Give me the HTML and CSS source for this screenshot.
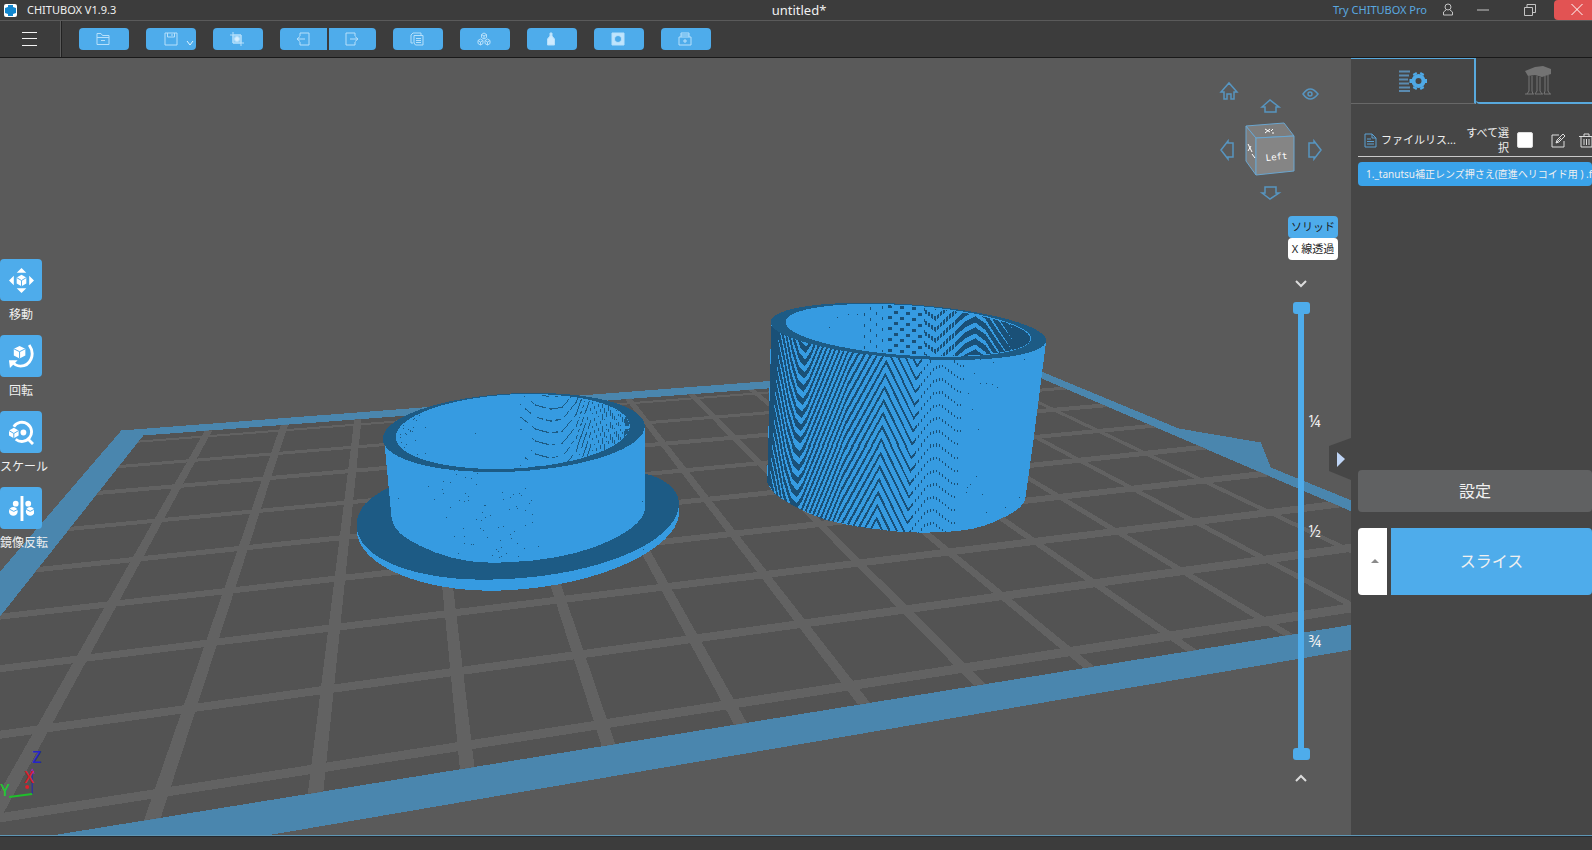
FILE: index.html
```html
<!DOCTYPE html>
<html lang="ja">
<head>
<meta charset="utf-8">
<title>CHITUBOX V1.9.3</title>
<link rel="stylesheet" href="styles.css">
</head>
<body>
<header class="titlebar">
  <div class="brand">
    <svg class="logo" viewBox="0 0 13 13" aria-hidden="true"><rect width="13" height="13" rx="2" fill="#fff"/><path d="M4 1h5v2l3 1v5l-3 1v2H4v-2L1 9V4l3-1z" fill="#1287cf"/></svg>
    <span>CHITUBOX V1.9.3</span>
  </div>
  <h1 class="doc-title">untitled*</h1>
  <div class="window-tools">
    <a class="pro-link" href="#">Try CHITUBOX Pro</a>
    <button class="win-btn" aria-label="アカウント"><svg width="12" height="14" viewBox="0 0 12 14"><circle cx="6" cy="4" r="3"/><path d="M4 7 1.500 9v3h9V9L8 7"/></svg></button>
    <button class="win-btn win-min" aria-label="最小化"><svg width="12" height="14" viewBox="0 0 12 14"><path d="M0 7h12"/></svg></button>
    <button class="win-btn win-max" aria-label="元に戻す"><svg width="12" height="14" viewBox="0 0 12 14"><path d="M.5 4.500h8v8h-8zM3 4.500v-3h8.500v8h-3"/></svg></button>
    <button class="win-btn win-close" aria-label="閉じる"><svg width="12" height="14" viewBox="0 0 12 14"><path d="m.5 1 11 11m0-11-11 11"/></svg></button>
  </div>
</header>

<nav class="toolbar">
  <button class="menu-btn" aria-label="メニュー"><svg width="16" height="14" viewBox="0 0 16 14" shape-rendering="crispEdges"><path d="M.5 .5h15M.5 6.500h15M.5 13.500h15"/></svg></button>
  <div class="tool-row">
    <button class="tool" aria-label="開く"><svg viewBox="0 0 14 14"><path d="M1 12.500V1.500h4l1.500 2H13v9zM1 5.500h12M5 8.500h4"/></svg></button>
    <button class="tool tool-save" aria-label="保存"><svg viewBox="0 0 14 14"><path d="M1 1h12v12H1zM3.500 1v4h7V1M8 2v2"/></svg><svg class="caret" viewBox="0 0 8 6"><path d="m1 1 3 4 3-4"/></svg></button>
    <button class="tool" aria-label="スクリーンショット"><svg viewBox="0 0 14 14"><path d="M3 0v11h11M0 3h11v11"/><path d="M3 3h8v8H3z" fill="#8fcdf6"/><circle cx="7" cy="7" r="2.500" fill="#d8efff"/></svg></button>
    <div class="tool-pair">
      <button class="tool" aria-label="元に戻す"><svg viewBox="0 0 14 14"><path d="M4 4V1h9v12H4v-3M1 7h8M4 4.500 1 7l3 2.500"/></svg></button>
      <button class="tool" aria-label="やり直す"><svg viewBox="0 0 14 14"><path d="M10 4V1H1v12h9v-3M5 7h8m-3-2.500L13 7l-3 2.500"/></svg></button>
    </div>
    <button class="tool" aria-label="コピー"><svg viewBox="0 0 14 14"><path d="M3 11H1V3l2-2h8v2M4 3.500h9V13H5.500L4 11zM6 6.500h5M6 8.500h5M6 10.500h5"/></svg></button>
    <button class="tool" aria-label="自動レイアウト"><svg viewBox="0 0 14 14"><path d="m7 1 2.500 1.500v3L7 7 4.500 5.500v-3zM4.500 2.500 7 4l2.500-1.500M7 4v3M3.500 7 6 8.500v3L3.500 13 1 11.500v-3zM1 8.500 3.500 10 6 8.500M3.500 10v3M10.500 7 13 8.500v3L10.500 13 8 11.500v-3zM8 8.500l2.500 1.500L13 8.500M10.500 10v3"/></svg></button>
    <button class="tool" aria-label="中空"><svg viewBox="0 0 14 14"><path d="M6 1h2v3l2.500 3v6h-7V7L6 4z" fill="#cdeaff"/></svg></button>
    <button class="tool" aria-label="穴あけ"><svg viewBox="0 0 14 14"><path fill-rule="evenodd" d="M1 1h12v12H1zM7 3.500a3.500 3.500 0 1 0 .01 0z" fill="#bfe4fd"/></svg></button>
    <button class="tool" aria-label="修復"><svg viewBox="0 0 14 14"><path d="M1 5h12v8H1zM3 5V1h8v4M3 3h8M7 7v4M5 9h4"/></svg></button>
  </div>
</nav>

<main class="workspace">
  <section class="viewport" aria-label="3D ビュー">
    <svg class="scene" viewBox="0 58 1351 776" preserveAspectRatio="xMidYMid slice" shape-rendering="crispEdges" aria-hidden="true">
      <defs>
        <clipPath id="floorClip"><path d="M144 435 1020 369 1351 511V624L0 843V617z"/></clipPath>
      </defs>
      <path class="band" d="M122 430 1000 363 1043 372 1178 428 1260 442 1270 467 1351 500V649L200 846H-20V595z"/>
      <path class="void" d="M0 380H122V430L0 572z"/>
      <path class="floor" d="M144 435 1020 369 1351 511V624L0 843V617z"/>
      <g id="grid" clip-path="url(#floorClip)"></g>

      <path class="lit" d="M357 522v8c3 38 70 60 133 60 100 0 186-40 189-76v-12z"/>
      <path class="shade" d="M395 484c-26 12-38 24-38 40 0 36 63 55 126 55 107 0 196-36 196-76 0-14-14-25-34-30z"/>
      <path class="lit" d="M384 434 392 518c2 12 12 19 28 27 20 10 44 17 70 17 40 0 75-5 103-15 30-11 52-26 52-39V428z"/>
      <ellipse class="shade" cx="514" cy="432" rx="131" ry="39" transform="rotate(-3 514 432)"/>
      <ellipse class="lit" cx="513" cy="431" rx="117" ry="37" transform="rotate(-3 513 431)"/>
      <path id="ringMoire" class="shade"/>

      <path class="lit" d="M771 325 767 480c2 10 10 16 23 23 14 8 20 11 33 15 16 5 31 8 50 10 20 3 32 4 50 4s34-1 50-4c14-3 24-8 34-13 12-6 17-12 18-18l8-57 13-102z"/>
      <path id="wallMoire" class="deep"/>
      <ellipse class="shade" cx="908" cy="331" rx="138" ry="27" transform="rotate(4 908 331)"/>
      <ellipse class="lit" cx="908" cy="330" rx="123" ry="25" transform="rotate(4 908 330)"/>
      <path id="boreMoire" class="deep"/>

      <g class="axes" shape-rendering="auto">
        <path d="M33 768v25" stroke="#2424b8"/><path d="M33 793 10 796" stroke="#1fbf2b" stroke-width="2"/><path d="m33 768 2 5M31 773l2-5" stroke="#a02ab0"/>
        <circle cx="28" cy="786" r="2" fill="#e0202c"/>
        <text x="33" y="762" fill="#2424c8">Z</text><text x="25" y="782" fill="#d9202c">X</text><text x="1" y="795" fill="#22c832">Y</text>
      </g>
    </svg>

    <ul class="side-tools">
      <li><button id="t-move"><svg viewBox="0 0 26 26"><path d="m13 0 5 5H8zM13 26l-5-5h10zM0 13l5-5v10zM26 13l-5 5V8z"/><path d="m13 7 5 3v6l-5 3-5-3v-6z"/><path class="cut" d="m8 10 5 3 5-3M13 13v6"/></svg></button><label for="t-move">移動</label></li>
      <li><button id="t-rotate"><svg viewBox="0 0 26 26"><path d="m11 2 6 3v7l-6 3-6-3V5z"/><path class="cut" d="m5 5 6 3 6-3M11 8v7"/><path class="arc" d="M21 1c7 10 1 22-9 22-4 0-7-2-9-5"/><path d="M0 17h9l-8 8z"/></svg></button><label for="t-rotate">回転</label></li>
      <li><button id="t-scale"><svg viewBox="0 0 26 26"><path class="arc" d="M5 7a10 10 0 1 1 2 13M20 20l5 5"/><path d="m5 8 5 3v5l-5 3-5-3v-5z"/><path class="cut" d="m0 11 5 3 5-3M5 14v5"/><circle cx="15" cy="13" r="3"/></svg></button><label for="t-scale">スケール</label></li>
      <li><button id="t-mirror"><svg viewBox="0 0 26 26"><path d="M12 0h3v26h-3z"/><circle cx="7" cy="8" r="3"/><circle cx="20" cy="8" r="3"/><circle cx="4.500" cy="16" r="4.500"/><circle cx="22" cy="16" r="4.500"/><path class="cut" d="m1 14 4 2 4-2M26 14l-4 2-4-2"/></svg></button><label for="t-mirror">鏡像反転</label></li>
    </ul>

    <div class="view-cube">
      <svg width="132" height="124" viewBox="0 0 132 124" aria-label="Left">
        <g class="cube-nav">
          <path d="M2 12 10 3l8 9h-3v7h-3v-5H8v5H5v-7z"/>
          <path d="M84 14q7-10 15 0-8 10-15 0z"/><circle cx="91" cy="14" r="2"/>
          <path d="m43 27 8-7 9 7h-3v5H46v-5z"/>
          <path d="m2 70 7-9v2h5v14H9v2zM102 70l-7-9v2h-5v14h5v2z"/>
          <path d="m43 113 8 6 9-6h-3v-6H46v6z"/>
        </g>
        <path class="cube-side" d="m27 46 10 12v37L27 81z"/><path class="cube-top" d="m27 46 38-3 10 13-38 2z"/><path class="cube-front" d="m37 58 38-2v35l-38 4z"/>
        <g class="cube-text"><text x="47" y="81" transform="rotate(-6 47 81)">Left</text></g>
        <path class="cube-scribble" d="m29 64 4 8m-4-1 3-5m1 8 3 4M46 49l5 3m-5 1 5-4m2 4h2m-1-4-2 2"/>
      </svg>
    </div>

    <div class="mode-toggle">
      <button class="mode is-on">ソリッド</button>
      <button class="mode">X 線透過</button>
    </div>

    <div class="layer-slider">
      <button aria-label="下へ"><svg width="12" height="8" viewBox="0 0 12 8"><path d="m1 1 5 5 5-5"/></svg></button>
      <div class="track">
        <input type="range" min="0" max="100" value="0" aria-label="上端">
        <input type="range" min="0" max="100" value="100" aria-label="下端">
        <div class="marks"><span>¼</span><span>½</span><span>¾</span></div>
      </div>
      <button aria-label="上へ"><svg width="12" height="8" viewBox="0 0 12 8"><path d="m1 7 5-5 5 5"/></svg></button>
    </div>
    <button class="collapse" aria-label="パネルを閉じる"><svg width="22" height="42" viewBox="0 0 22 42"><path d="M0 8 22 0v42L0 33z" fill="#464646"/><path d="m8 14 8 7-8 8z" fill="#bfd5f6"/></svg></button>
  </section>

  <aside class="panel">
    <div class="tabs">
      <button class="tab is-active" aria-label="設定"><svg width="28" height="22" viewBox="0 0 28 22"><path d="M0 1.500h11M0 5.500h10M0 9.500h9M0 13.500h10M0 17.500h11M0 21h11" stroke="#5b8bb0" stroke-width="2"/><g transform="translate(19.500 11)"><circle r="5" fill="none" stroke="#4fa9e6" stroke-width="4"/><path d="M-6 0h-3M6 0h3M-3-6l-1-2M3-6l1-2M-3 6l-1 2M3 6l1 2" stroke="#4fa9e6" stroke-width="4"/></g></svg></button>
      <button class="tab" aria-label="サポート"><svg width="28" height="29" viewBox="0 0 28 29"><path d="M1 5 11 1l8-1 8 3v5l-9 3-7-2-7 1z" fill="#737373"/><path d="M5 10v15l-2 3M8 10v15l1 3M13 10v15l-2 3M16 11v14l2 3M21 10v15l-1 3M24 9v16l2 3M1 28h9M11 28h8M20 28h7" fill="none" stroke="#777"/></svg></button>
    </div>
    <div class="file-head">
      <svg width="13" height="15" viewBox="0 0 13 15"><path d="M1 1h7l4 4v9H1zM8 1v4h4M3 6h4M3 8.500h7M3 11h7" fill="none" stroke="#5aa0d2"/></svg>
      <span class="file-title">ファイルリス...</span>
      <label class="all-label" for="all">すべて選択</label>
      <input type="checkbox" id="all">
      <button class="head-btn" aria-label="編集"><svg width="15" height="15" viewBox="0 0 15 15"><path d="M8 2H1v12h12V8M5 10l1-3 6-6 2 2-6 6zM5 10l5-5"/></svg></button>
      <button class="head-btn" aria-label="削除"><svg width="15" height="15" viewBox="0 0 15 15"><path d="M0 3.500h15M5 3V1h5v2M2 4v10h11V4M5 6v6M7.500 6v6M10 6v6"/></svg></button>
    </div>
    <ul class="files"><li>1._tanutsu補正レンズ押さえ(直進ヘリコイド用 ) .f</li></ul>
    <button class="settings">設定</button>
    <div class="slice-row">
      <button class="slice-more" aria-label="その他"><svg width="8" height="4" viewBox="0 0 8 4"><path d="M0 4 4 0l4 4z" fill="#8a8a8a"/></svg></button>
      <button class="slice">スライス</button>
    </div>
  </aside>
</main>
<footer class="statusbar"></footer>
<script src="scene.js"></script>
</body>
</html>
```
FILE: styles.css
```css
* { box-sizing: border-box; }
body {
  margin: 0;
  height: 100vh;
  display: flex;
  flex-direction: column;
  overflow: hidden;
  background: #3c3c3c;
  color: #f0f0f0;
  font: 12px/16px "Noto Sans", "Noto Sans CJK JP", sans-serif;
}
button { margin: 0; padding: 0; border: 0; background: none; color: inherit; font: inherit; cursor: pointer; }
svg { display: block; }
ul { margin: 0; padding: 0; list-style: none; }

.titlebar {
  display: grid;
  grid-template-columns: 1fr auto 1fr;
  align-items: center;
  height: 21px;
  border-bottom: 1px solid #5a5a5a;
  font-size: 11px;
}
.brand { display: flex; align-items: center; gap: 10px; padding-left: 4px; }
.logo { width: 13px; height: 13px; }
.doc-title { margin: 0; padding-left: 6px; font-size: 13px; font-weight: 400; line-height: 20px; }
.window-tools { display: flex; justify-content: flex-end; align-items: center; height: 20px; }
.pro-link { color: #5aa9e0; text-decoration: none; margin-right: 15px; }
.win-btn { display: grid; place-items: center; width: 12px; height: 20px; }
.win-btn svg { fill: none; stroke: #c4c4c4; }
.win-min { margin-left: 23px; }
.win-max { margin: 0 18px 0 35px; }
.win-close { width: 38px; padding-left: 8px; background: #e25353; border-radius: 4px 0 0 4px; }
.win-close svg { stroke: #fff; }

.toolbar { display: flex; align-items: center; height: 37px; border-bottom: 1px solid #191919; }
.menu-btn { display: grid; place-items: center; width: 61px; height: 36px; padding-right: 3px; border-right: 1px solid #5c5c5c; box-shadow: 1px 0 #222; }
.menu-btn svg { fill: none; stroke: #f4f4f4; }
.tool-row { display: flex; gap: 17px; padding-left: 18px; }
.tool-pair { display: flex; gap: 2px; }
.tool { display: grid; place-items: center; width: 50px; height: 22px; padding-right: 2px; border-radius: 4px; background: #4eaceb; }
.tool svg { width: 14px; height: 14px; fill: none; stroke: #b6e0fb; }
.tool-save { display: flex; align-items: center; justify-content: flex-end; gap: 8px; padding-right: 2px; }
.tool-save .caret { width: 8px; height: 6px; margin-top: 8px; stroke: #e2f4ff; }
.tool-pair .tool { width: 47px; }
.tool-pair .tool:first-child { border-radius: 4px 0 0 4px; }
.tool-pair .tool:last-child { border-radius: 0 4px 4px 0; }

.workspace { flex: 1; min-height: 0; display: flex; }
.viewport { position: relative; flex: 1; min-width: 0; overflow: hidden; background: #5a5a5a; }
.scene { width: 100%; height: 100%; }
.band { fill: #4a86ae; }
.void { fill: #5a5a5a; }
.floor { fill: #535353; }
#grid { fill: #626262; stroke: #626262; }
.lit { fill: #369be1; }
.shade { fill: #1d5b85; }
.deep { fill: #1a5077; }
.axes { fill: none; font: 500 16px "Noto Sans", sans-serif; }

.side-tools { position: absolute; left: 0; top: 201px; display: flex; flex-direction: column; gap: 12px; }
.side-tools li { display: flex; flex-direction: column; align-items: flex-start; gap: 6px; }
.side-tools button { display: grid; place-items: center; width: 42px; height: 42px; border-radius: 4px; background: #4eaceb; }
.side-tools button svg { width: 25px; height: 25px; fill: #fff; }
.side-tools .cut { fill: none; stroke: #4eaceb; }
.side-tools .arc { fill: none; stroke: #fff; stroke-width: 3; }
.side-tools label { min-width: 42px; text-align: center; white-space: nowrap; }

.view-cube { position: absolute; right: 0; top: 22px; }
.cube-nav { fill: none; stroke: #5795c0; stroke-width: 1.5; }
.cube-side, .cube-top, .cube-front { fill: #858585; stroke: #6aa6d0; }
.cube-side, .cube-top { fill: #7d7d7d; }
.cube-text { fill: #fff; font: 9px "DejaVu Sans Mono", monospace; }
.cube-scribble { fill: none; stroke: #fff; }

.mode-toggle { position: absolute; right: 13px; top: 158px; display: flex; flex-direction: column; }
.mode { width: 50px; height: 22px; border-radius: 4px; background: #fff; color: #1d1d1d; font-size: 11px; white-space: nowrap; }
.mode.is-on { background: #4eaceb; }

.layer-slider { position: absolute; right: 29px; top: 222px; bottom: 53px; width: 42px; display: flex; flex-direction: column; align-items: center; gap: 14px; }
.layer-slider svg { fill: none; stroke: #dcdcdc; stroke-width: 2; }
.track { position: relative; flex: 1; width: 17px; background: linear-gradient(#4eaceb, #4eaceb) center / 6px 100% no-repeat; }
.track input { position: absolute; inset: 0; width: 17px; height: 100%; margin: 0; appearance: none; background: none; writing-mode: vertical-lr; pointer-events: none; }
.track input::-webkit-slider-runnable-track { background: none; width: 17px; }
.track input::-webkit-slider-thumb { appearance: none; width: 17px; height: 12px; border-radius: 3px; background: #4eaceb; pointer-events: auto; }
.marks { position: absolute; left: 16px; top: 0; height: 100%; display: flex; flex-direction: column; justify-content: center; font-size: 16px; line-height: 20px; gap: 90px; }
.collapse { position: absolute; right: 0; top: 380px; }

.panel { width: 241px; display: flex; flex-direction: column; overflow: hidden; background: #464646; }
.tabs { display: flex; height: 46px; flex: none; }
.tab { display: grid; place-items: center; flex: 1; padding-left: 8px; background: #3f3f3f; border-bottom: 2px solid #58a9dd; border-radius: 0 0 0 4px; }
.tab.is-active { flex: none; width: 125px; padding-left: 0; background: #464646; border-top: 1px solid #58a9dd; border-right: 2px solid #58a9dd; border-bottom: 1px solid #686868; border-radius: 0; }
.file-head { display: flex; align-items: center; flex: none; height: 33px; margin: 20px 0 0 7px; padding-left: 6px; border-bottom: 1px solid #c8c8c8; overflow: hidden; }
.file-head > * { flex: none; }
.file-title { margin-left: 4px; width: 78px; font-size: 11px; white-space: nowrap; }
.all-label { width: 50px; padding-left: 4px; text-align: right; font-size: 11px; line-height: 15px; }
.file-head input { appearance: none; width: 16px; height: 16px; margin: 0 18px 0 8px; border-radius: 2px; background: #fff; border: 1px solid #ddd; }
.head-btn { margin-right: 13px; }
.head-btn svg { fill: none; stroke: #dcdcdc; }
.files { flex: 307; margin: 5px 0 0 7px; }
.files li { height: 24px; padding-left: 8px; border-radius: 4px; background: #3aa3ea; font-size: 10px; line-height: 24px; white-space: nowrap; overflow: hidden; }
.settings { flex: none; height: 42px; margin-left: 7px; border-radius: 4px; background: #606162; font-size: 16px; }
.slice-row { flex: 0 0 auto; display: flex; gap: 4px; height: 67px; margin: 16px 0 0 7px; }
.slice-more { display: grid; place-items: center; width: 29px; border-radius: 4px 0 0 4px; background: #fff; padding-left: 4px; }
.slice { flex: 1; border-radius: 0 4px 4px 0; background: #4eaceb; font-size: 16px; }
.panel::after { content: ""; flex: 240; }

.statusbar { height: 15px; flex: none; border-top: 1px solid #5f96b4; box-shadow: inset 0 1px #252a30; }
```
FILE: scene.js
```js
// Build plate: lines that run to the vanishing point, then the cross lines.
const NS = "http://www.w3.org/2000/svg";
const grid = document.getElementById("grid");
const add = (tag, attrs) => {
  const el = document.createElementNS(NS, tag);
  for (const k in attrs) el.setAttribute(k, attrs[k]);
  grid.appendChild(el);
};
const vx = 395, vy = 96;
for (let k = 1; k <= 13; k++) {
  const s = -0.335 + 0.2215 * (k - 2);
  const at = (y, d) => (vx + (s + d) * (y - vy)) + " " + y;
  add("path", { d: `M${at(340, -0.011)}L${at(340, 0.011)}L${at(850, 0.011)}L${at(850, -0.011)}z`, stroke: "none" });
}
[[817, 0.1554, 9], [734, 0.1384, 8], [668, 0.123, 7], [616, 0.113, 6], [573, 0.105, 5],
 [535, 0.0952, 4], [501, 0.087, 4], [476, 0.083, 3], [452, 0.078, 2]]
  .forEach(([y, s, w]) => add("path", { d: `M0 ${y}L1351 ${y - s * 1351}`, "stroke-width": w }));

// Interference pattern of the facets, built from one-pixel-wide vertical runs.
function runs(x0, x1, y0, y1, dark) {
  let d = "";
  for (let x = x0; x < x1; x++) {
    let start = -1;
    for (let y = y0; y <= y1; y++) {
      const on = y < y1 && dark(x, y);
      if (on && start < 0) start = y;
      if (!on && start >= 0) { d += `M${x} ${start}h1v${y - start}h-1z`; start = -1; }
    }
  }
  return d;
}
const curve = pts => x => {
  for (let i = 1; i < pts.length; i++) {
    if (x <= pts[i][0]) {
      const [a, b] = pts[i - 1], [c, e] = pts[i];
      return b + (e - b) * (x - a) / (c - a);
    }
  }
  return pts[pts.length - 1][1];
};
const frac = v => v - Math.floor(v);
const noise = (x, y) => frac(Math.sin(x * 12.9898 + y * 78.233) * 43758.5453);
const ellipse = (cx, cy, rx, ry, deg) => (x, y) => {
  const a = deg * Math.PI / 180, dx = x - cx, dy = y - cy;
  const u = dx * Math.cos(a) + dy * Math.sin(a), v = dy * Math.cos(a) - dx * Math.sin(a);
  return (u / rx) ** 2 + (v / ry) ** 2 < 1;
};

const bottom = curve([[766, 480], [774, 492], [790, 503], [823, 518], [873, 528], [923, 532], [973, 528], [1007, 515], [1025, 497], [1046, 338]]);
const wave = curve([[776, -30], [784, 0], [792, 32], [800, 54], [806, 60], [811, 52], [850, -60], [887, -135], [918, -78], [936, -102], [944, -104], [962, -90]]);
const fill = curve([[776, 0.85], [784, 0.6], [800, 0.52], [815, 0.48], [850, 0.42], [890, 0.32], [920, 0.24], [950, 0.2], [962, 0.14]]);
document.getElementById("wallMoire").setAttribute("d", runs(767, 1046, 326, 532, (x, y) => {
  if (y > bottom(x) || x < 771 - (y - 326) * 0.027) return false;
  const u = x + (y - 340) * 0.062;
  if (u > 966) return noise(x, y) > 0.9985;
  if (u < 778) return true;
  if (u > 922 && x % 3 !== 0) return false;
  return frac((y - wave(u)) / 13) < fill(u);
}));

const bore = ellipse(908, 330, 122, 24, 4);
const boreWave = curve([[850, 0], [900, 6], [935, 30], [965, 2], [975, -3], [985, 4], [1000, 26], [1032, 70]]);
const boreFill = curve([[850, 0], [880, 0.22], [900, 0.3], [940, 0.4], [965, 0.5], [985, 0.6], [1005, 0.85], [1012, 1]]);
document.getElementById("boreMoire").setAttribute("d", runs(786, 1032, 300, 360, (x, y) => {
  if (!bore(x, y)) return false;
  if (x < 860) return noise(x, y) > 0.998;
  if (x < 888) return x % 6 === 0 && frac((y + x) / 11) < 0.25;
  if (x < 925) return frac((y + Math.floor(x / 6) * 5) / 11) < 0.25 && x % 6 < 4;
  if (x < 955 && x % 3 === 0) return false;
  return frac((y - boreWave(x)) / 11) < boreFill(x);
}));

const ring = ellipse(513, 431, 116, 36, -3);
const ringWave = curve([[515, -20], [535, -4], [550, 0], [562, -2], [575, -18], [590, -60], [610, -130], [630, -220]]);
document.getElementById("ringMoire").setAttribute("d", runs(385, 645, 393, 562, (x, y) => {
  if (ring(x, y)) {
    if (x < 430) return noise(x, y) > 0.965 + (x - 396) * 0.001;
    if (x < 520) return noise(x, y) > 0.9995;
    if (x > 624) return frac(y / 13) < 0.7;
    const w = x > 600 ? 0.42 : x > 575 ? 0.24 : 0.1;
    if (noise(Math.floor(x / 3), Math.floor(y / 3)) > (x < 535 ? 0.3 : 0.75)) return false;
    if (x > 590 && x % 2) return false;
    return frac((y - ringWave(x)) / 12) < w;
  }
  if (y < 474 - Math.abs(x - 500) * 0.12 || y > 556) return false;
  return noise(x, y) > (x > 440 && x < 535 ? 0.991 : 0.9993);
}));
```
